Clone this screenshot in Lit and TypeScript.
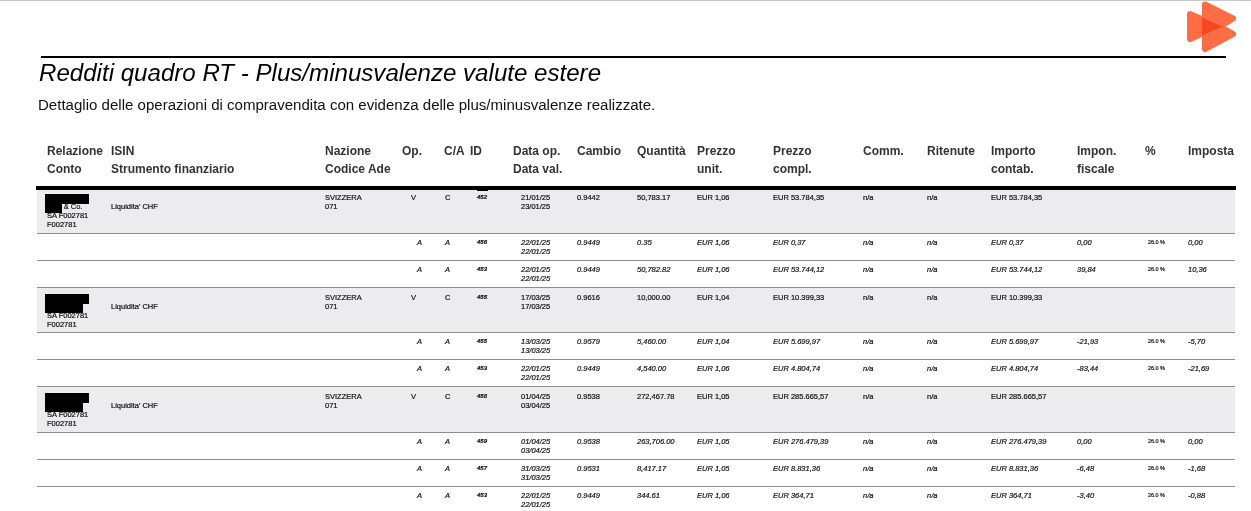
import { css, html, LitElement, TemplateResult } from "lit";
import { customElement } from "lit/decorators.js";

interface Op {
    op: string;
    ca: string;
    id: string;
    dates: string[];
    cambio: string;
    qty: string;
    unit: string;
    compl: string;
    importo: string;
    impon?: string;
    imposta?: string;
}

interface Group {
    // row height up to and including the rule below it
    height: number;
    first?: boolean;
    rel: string[];
    mask: "first" | "other";
    main: Op;
    subs: Op[];
}

const groups: Group[] = [
    {
        height: 44,
        first: true,
        rel: ["\u00a0", "\u00a0\u00a0\u00a0\u00a0\u00a0\u00a0\u00a0\u00a0& Co.", "SA F002781", "F002781"],
        mask: "first",
        main: { op: "V", ca: "C", id: "452", dates: ["21/01/25", "23/01/25"], cambio: "0.9442", qty: "50,783.17", unit: "EUR 1,06", compl: "EUR 53.784,35", importo: "EUR 53.784,35" },
        subs: [
            { op: "A", ca: "A", id: "456", dates: ["22/01/25", "22/01/25"], cambio: "0.9449", qty: "0.35", unit: "EUR 1,06", compl: "EUR 0,37", importo: "EUR 0,37", impon: "0,00", imposta: "0,00" },
            { op: "A", ca: "A", id: "453", dates: ["22/01/25", "22/01/25"], cambio: "0.9449", qty: "50,782.82", unit: "EUR 1,06", compl: "EUR 53.744,12", importo: "EUR 53.744,12", impon: "39,84", imposta: "10,36" },
        ],
    },
    {
        height: 45,
        rel: ["\u00a0", "\u00a0", "SA F002781", "F002781"],
        mask: "other",
        main: { op: "V", ca: "C", id: "455", dates: ["17/03/25", "17/03/25"], cambio: "0.9616", qty: "10,000.00", unit: "EUR 1,04", compl: "EUR 10.399,33", importo: "EUR 10.399,33" },
        subs: [
            { op: "A", ca: "A", id: "455", dates: ["13/03/25", "13/03/25"], cambio: "0.9579", qty: "5,460.00", unit: "EUR 1,04", compl: "EUR 5.699,97", importo: "EUR 5.699,97", impon: "-21,93", imposta: "-5,70" },
            { op: "A", ca: "A", id: "453", dates: ["22/01/25", "22/01/25"], cambio: "0.9449", qty: "4,540.00", unit: "EUR 1,06", compl: "EUR 4.804,74", importo: "EUR 4.804,74", impon: "-83,44", imposta: "-21,69" },
        ],
    },
    {
        height: 46,
        rel: ["\u00a0", "\u00a0", "SA F002781", "F002781"],
        mask: "other",
        main: { op: "V", ca: "C", id: "458", dates: ["01/04/25", "03/04/25"], cambio: "0.9538", qty: "272,467.78", unit: "EUR 1,05", compl: "EUR 285.665,57", importo: "EUR 285.665,57" },
        subs: [
            { op: "A", ca: "A", id: "459", dates: ["01/04/25", "03/04/25"], cambio: "0.9538", qty: "263,706.00", unit: "EUR 1,05", compl: "EUR 276.479,39", importo: "EUR 276.479,39", impon: "0,00", imposta: "0,00" },
            { op: "A", ca: "A", id: "457", dates: ["31/03/25", "31/03/25"], cambio: "0.9531", qty: "8,417.17", unit: "EUR 1,05", compl: "EUR 8.831,36", importo: "EUR 8.831,36", impon: "-6,48", imposta: "-1,68" },
            { op: "A", ca: "A", id: "453", dates: ["22/01/25", "22/01/25"], cambio: "0.9449", qty: "344.61", unit: "EUR 1,06", compl: "EUR 364,71", importo: "EUR 364,71", impon: "-3,40", imposta: "-0,88" },
        ],
    },
];

const headers: string[][] = [
    ["Relazione", "Conto"],
    ["ISIN", "Strumento finanziario"],
    ["Nazione", "Codice Ade"],
    ["Op."],
    ["C/A"],
    ["ID"],
    ["Data op.", "Data val."],
    ["Cambio"],
    ["Quantità"],
    ["Prezzo", "unit."],
    ["Prezzo", "compl."],
    ["Comm."],
    ["Ritenute"],
    ["Importo", "contab."],
    ["Impon.", "fiscale"],
    ["%"],
    ["Imposta"],
];

@customElement("app-root")
export class AppRoot extends LitElement {
    private renderLines(lines: string[]): TemplateResult[] {
        return lines.map((l) => html`<div>${l}</div>`);
    }

    private renderOpCells(o: Op, sub: boolean): TemplateResult {
        return html`
            <div class="op ${sub ? "op-sub" : ""}">${o.op}</div>
            <div class="ca">${o.ca}</div>
            <div class="id">${o.id}</div>
            <div class="date">${this.renderLines(o.dates)}</div>
            <div>${o.cambio}</div>
            <div>${o.qty}</div>
            <div>${o.unit}</div>
            <div>${o.compl}</div>
            <div>n/a</div>
            <div>n/a</div>
            <div>${o.importo}</div>
            <div>${o.impon ?? ""}</div>
            <div class="pct">${sub ? "26.0 %" : ""}</div>
            <div>${o.imposta ?? ""}</div>
        `;
    }

    private renderGroup(g: Group): TemplateResult {
        return html`
            <div class="row group ${g.first ? "first" : ""}" style="height:${g.height}px">
                <div class="rel">
                    ${this.renderLines(g.rel)}
                    <span class="mask-top"></span>
                    <span class="mask-low ${g.mask === "first" ? "narrow" : ""}"></span>
                </div>
                <div>${this.renderLines(["\u00a0", "Liquidita' CHF"])}</div>
                <div>${this.renderLines(["SVIZZERA", "071"])}</div>
                ${this.renderOpCells(g.main, false)}
                ${g.first ? html`<span class="id-mark"></span>` : ""}
            </div>
            ${g.subs.map(
                (s) => html`
                    <div class="row sub">
                        <div></div>
                        <div></div>
                        <div></div>
                        ${this.renderOpCells(s, true)}
                    </div>
                `,
            )}
        `;
    }

    protected render(): TemplateResult {
        return html`
            <div class="logo-bar">
                <svg class="logo" width="52" height="53" viewBox="0 0 52 53">
                    <g stroke-linejoin="round" stroke-width="6">
                        <path d="M4 13 L33 25.500 L4 38 Z" fill="#ff6d47" stroke="#ff6d47" />
                        <path d="M19 3.500 L47 17.500 L34 25.500 L47 33 L19 48 Z" fill="#ff6d47" stroke="#ff6d47" />
                        <path d="M16 16.500 L36 25.500 L16 34.500 Z" fill="#f5481d" stroke="none" />
                    </g>
                </svg>
            </div>
            <div class="rule"></div>
            <h1>Redditi quadro RT - Plus/minusvalenze valute estere</h1>
            <p class="lead">Dettaglio delle operazioni di compravendita con evidenza delle plus/minusvalenze realizzate.</p>
            <div class="table">
                <div class="row head">
                    ${headers.map((h) => html`<div>${this.renderLines(h)}</div>`)}
                </div>
                ${groups.map((g) => this.renderGroup(g))}
            </div>
        `;
    }

    static styles = css`
        :host {
            display: block;
            width: 1251px;
            height: 511px;
            overflow: hidden;
            background: #fff;
            box-sizing: border-box;
            border-top: 1px solid #c8c8c8;
            font-family: "Liberation Sans", Arial, sans-serif;
            color: #111;
            filter: blur(0.3px);
        }
        .logo-bar {
            display: flex;
            justify-content: flex-end;
            height: 55px;
            padding-right: 13px;
        }
        .logo {
            display: block;
        }
        .rule {
            height: 2px;
            margin: 0 25px 0 41px;
            background: #000;
        }
        h1 {
            margin: 1px 0 0 39px;
            font-size: 24.1px;
            line-height: 28px;
            font-weight: 400;
            font-style: italic;
            color: #000;
        }
        .lead {
            margin: 9px 0 0 38px;
            font-size: 15.05px;
            line-height: 18px;
        }
        .table {
            margin: 28px 16px 0 37px;
        }
        .row {
            position: relative;
            display: grid;
            grid-template-columns: 64px 214px 77px 42px 26px 43px 64px 60px 60px 76px 90px 64px 64px 86px 68px 43px 47px;
            padding-left: 10px;
            box-sizing: border-box;
            font-size: 7.5px;
            line-height: 9px;
            -webkit-text-stroke: 0.2px #111;
        }
        .head {
            height: 48px;
            font-size: 12px;
            line-height: 18px;
            font-weight: 700;
            color: #333;
            border-bottom: 4px solid #000;
            margin: 0 -1px;
            padding-left: 11px;
            white-space: nowrap;
            -webkit-text-stroke: 0;
        }
        .group {
            padding-top: 5px;
            background: #ecebed;
            border-bottom: 1px solid #8c8c8c;
        }
        .group.first {
            padding-top: 3px;
        }
        .sub {
            height: 27px;
            padding-top: 4px;
            font-style: italic;
            border-bottom: 1px solid #8c8c8c;
        }
        .rel {
            position: relative;
        }
        .mask-top,
        .mask-low {
            position: absolute;
            left: -2px;
            background: #000;
        }
        .mask-top {
            top: 1px;
            width: 44px;
            height: 10px;
        }
        .mask-low {
            top: 10px;
            width: 38px;
            height: 10px;
        }
        .mask-low.narrow {
            width: 17px;
        }
        .id-mark {
            position: absolute;
            left: 440px;
            top: -2px;
            width: 11px;
            height: 3px;
            background: #000;
        }
        .op {
            padding-left: 9px;
        }
        .op-sub {
            padding-left: 15px;
        }
        .ca {
            padding-left: 1px;
        }
        .id {
            padding-left: 7px;
            font-size: 6px;
            font-weight: 700;
            font-style: italic;
        }
        .date {
            padding-left: 8px;
        }
        .pct {
            padding-left: 3px;
            font-size: 5.4px;
            font-style: normal;
        }
    `;
}
